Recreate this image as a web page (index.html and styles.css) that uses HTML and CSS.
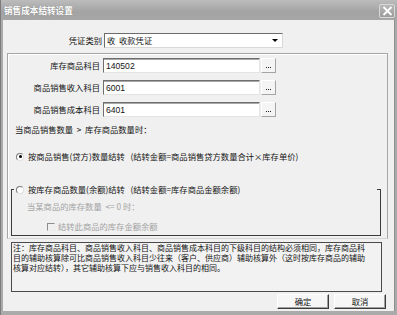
FILE: index.html
```html
<!DOCTYPE html>
<html lang="zh-CN">
<head>
<meta charset="utf-8">
<title>销售成本结转设置</title>
<link rel="stylesheet" href="styles.css">
</head>
<body>
<div class="window">
  <div class="titlebar">
    <span class="title">销售成本结转设置</span>
    <span class="close"><svg width="11" height="10" viewBox="0 0 11 10"><path d="M1.5 1 L9.5 9 M9.5 1 L1.5 9" stroke="#fff" stroke-width="1.8"/></svg></span>
  </div>
  <div class="frame">
    <div class="client">
      <div class="voucher-row">
        <span class="lbl">凭证类别</span>
        <div class="select"><span class="sel-text">收&nbsp;&nbsp;收款凭证</span><span class="arrow"></span></div>
      </div>
      <div class="group1">
        <div class="field"><span class="flbl">库存商品科目</span><div class="input">140502</div><div class="dots"><i></i><i></i><i></i></div></div>
        <div class="field"><span class="flbl">商品销售收入科目</span><div class="input">6001</div><div class="dots"><i></i><i></i><i></i></div></div>
        <div class="field"><span class="flbl">商品销售成本科目</span><div class="input">6401</div><div class="dots"><i></i><i></i><i></i></div></div>
        <div class="cond">当商品销售数量&nbsp;&nbsp;&gt;&nbsp;&nbsp;库存商品数量时：</div>
        <div class="radio-row"><span class="radio checked"></span><span>按商品销售(贷方)数量结转&nbsp;&nbsp;&nbsp;(结转金额=商品销售贷方数量合计×库存单价)</span></div>
        <fieldset class="group2">
          <legend class="legend"><span class="radio"></span><span>按库存商品数量(余额)结转&nbsp;&nbsp;&nbsp;(结转金额=库存商品金额余额)</span></legend>
          <div class="disabled">当某商品的库存数量&nbsp;&nbsp;&lt;=&nbsp;0&nbsp;时：</div>
          <div class="check-row"><span class="check"></span><span>结转此商品的库存金额余额</span></div>
        </fieldset>
      </div>
      <div class="note">
        <div class="nline">注：库存商品科目、商品销售收入科目、商品销售成本科目的下级科目的结构必须相同，库存商品科</div>
        <div class="nline">目的辅助核算除可比商品销售收入科目少往来（客户、供应商）辅助核算外（这时按库存商品的辅助</div>
        <div class="nline">核算对应结转），其它辅助核算下应与销售收入科目的相同。</div>
      </div>
      <div class="buttons"><div class="btn">确定</div><div class="btn">取消</div></div>
    </div>
  </div>
</div>
</body>
</html>
```

FILE: styles.css
```css
* { box-sizing: border-box; }
html, body { margin: 0; padding: 0; }
body {
  width: 397px;
  height: 315px;
  overflow: hidden;
  font-family: "Noto Sans CJK SC", "Liberation Sans", sans-serif;
  font-size: 8.3px;
  color: #141414;
  background: #a9a9a9;
}
.window {
  width: 397px;
  height: 315px;
  display: flex;
  flex-direction: column;
  background: #aaaaaa;
  border-left: 1px solid #7c7c7c;
}
.titlebar {
  height: 20px;
  flex: none;
  display: flex;
  align-items: center;
  justify-content: space-between;
  padding: 0 2px 0 3px;
  background: linear-gradient(#bcbcbc, #a3a3a3 60%, #a6a6a6);
}
.title {
  color: #fff;
  font-weight: bold;
  font-size: 8.6px;
  line-height: 11px;
  text-shadow: 0 0 1px #777;
}
.close {
  width: 16px;
  height: 14px;
  margin-top: 1px;
  border: 1px solid #d8d8d8;
  border-radius: 2px;
  background: linear-gradient(#b8b8b8, #9c9c9c);
  display: flex;
  align-items: center;
  justify-content: center;
}
.frame {
  flex: 1;
  display: flex;
  padding: 0 2px 4px 2px;
}
.client {
  flex: 1;
  background: #f0f0f0;
  display: flex;
  flex-direction: column;
  border-right: 1px solid #8e8e8e;
}
.voucher-row {
  margin-top: 13px;
  height: 15px;
  display: flex;
  align-items: center;
}
.lbl {
  width: 100px;
  text-align: right;
  line-height: 11px;
  padding-right: 1px;
}
.select {
  margin-left: 1px;
  width: 179px;
  height: 15px;
  background: #fff;
  border: 1px solid #8a8a8a;
  border-color: #6c6c6c #d8d8d8 #d8d8d8 #6c6c6c;
  display: flex;
  align-items: center;
  justify-content: space-between;
  padding: 0 3px 0 2px;
}
.sel-text { line-height: 11px; }
.arrow {
  width: 0;
  height: 0;
  border-left: 3px solid transparent;
  border-right: 3px solid transparent;
  border-top: 3px solid #000;
  margin-right: 1px;
}
.group1 {
  margin-top: 5px;
  margin-left: 4px;
  width: 381px;
  border: 1px solid #a6a6a6;
  border-bottom-color: #d6d6d6;
  box-shadow: inset 1px 1px 0 #fff;
  padding: 4px 0 2px 0;
  display: flex;
  flex-direction: column;
}
.field {
  height: 15px;
  display: flex;
  align-items: center;
  margin-bottom: 7px;
}
.field:nth-child(3) { margin-bottom: 0; }
.flbl {
  width: 92px;
  text-align: right;
  line-height: 11px;
}
.input {
  margin-left: 3px;
  width: 157px;
  height: 15px;
  background: #fff;
  border: 1px solid;
  border-color: #6e6e6e #e4e4e4 #e4e4e4 #6e6e6e;
  box-shadow: inset 0 1px 0 #a8a8a8;
  padding: 2px 0 0 2px;
  line-height: 11px;
  font-family: "Liberation Sans", sans-serif;
  font-size: 8.6px;
}
.dots {
  margin-left: 1px;
  width: 15px;
  height: 15px;
  background: #f4f4f4;
  border: 1px solid;
  border-color: #fff #a4a4a4 #a4a4a4 #fff;
  display: flex;
  justify-content: center;
  align-items: flex-end;
  gap: 1px;
  padding-bottom: 4px;
}
.dots i {
  width: 1px;
  height: 1px;
  background: #222;
}
.cond {
  margin-top: 7px;
  padding-left: 7px;
  line-height: 11px;
}
.radio-row {
  margin-top: 16px;
  padding-left: 8px;
  height: 11px;
  line-height: 11px;
  display: flex;
  align-items: center;
  gap: 4px;
}
.radio {
  width: 8px;
  height: 8px;
  flex: none;
  border-radius: 50%;
  background: #fff;
  border: 1px solid;
  border-color: #7a7a7a #e0e0e0 #e0e0e0 #7a7a7a;
  position: relative;
}
.radio.checked::after {
  content: "";
  position: absolute;
  left: 1.5px;
  top: 1.5px;
  width: 3px;
  height: 3px;
  border-radius: 50%;
  background: #000;
}
.group2 {
  margin: 22px 0 0 3px;
  width: 370px;
  border: 1px solid #3c3c3c;
  padding: 0 0 3px 2px;
  min-width: 0;
}
.legend {
  padding: 0 1px;
  width: 363px;
  height: 11px;
  line-height: 11px;
  display: flex;
  align-items: center;
  gap: 4px;
}
.legend .radio { margin-left: 1px; }
.disabled {
  margin-top: 6px;
  padding-left: 13px;
  line-height: 11px;
  color: #a3a3a3;
}
.check-row {
  margin-top: 9px;
  padding-left: 33px;
  height: 11px;
  line-height: 11px;
  display: flex;
  align-items: center;
  gap: 3px;
  color: #a3a3a3;
}
.check {
  width: 8px;
  height: 8px;
  border: 1px solid;
  border-color: #8c8c8c #ececec #ececec #8c8c8c;
}
.note {
  margin: 3px 0 0 8px;
  width: 371px;
  height: 50px;
  border: 1px solid #4a4a4a;
  background: #f2f2f2;
  padding: 0 0 0 1px;
  font-size: 8px;
  white-space: nowrap;
  overflow: hidden;
}
.nline {
  height: 9.8px;
  line-height: 9.8px;
}
.buttons {
  margin-top: 2px;
  display: flex;
  justify-content: flex-end;
  gap: 5px;
  padding-right: 8px;
}
.btn {
  width: 52px;
  height: 15px;
  background: #f6f6f6;
  border: 1px solid;
  border-color: #fff #3c3c3c #3c3c3c #fff;
  box-shadow: inset -1px -1px 0 #a0a0a0;
  text-align: center;
  line-height: 12px;
}
```
